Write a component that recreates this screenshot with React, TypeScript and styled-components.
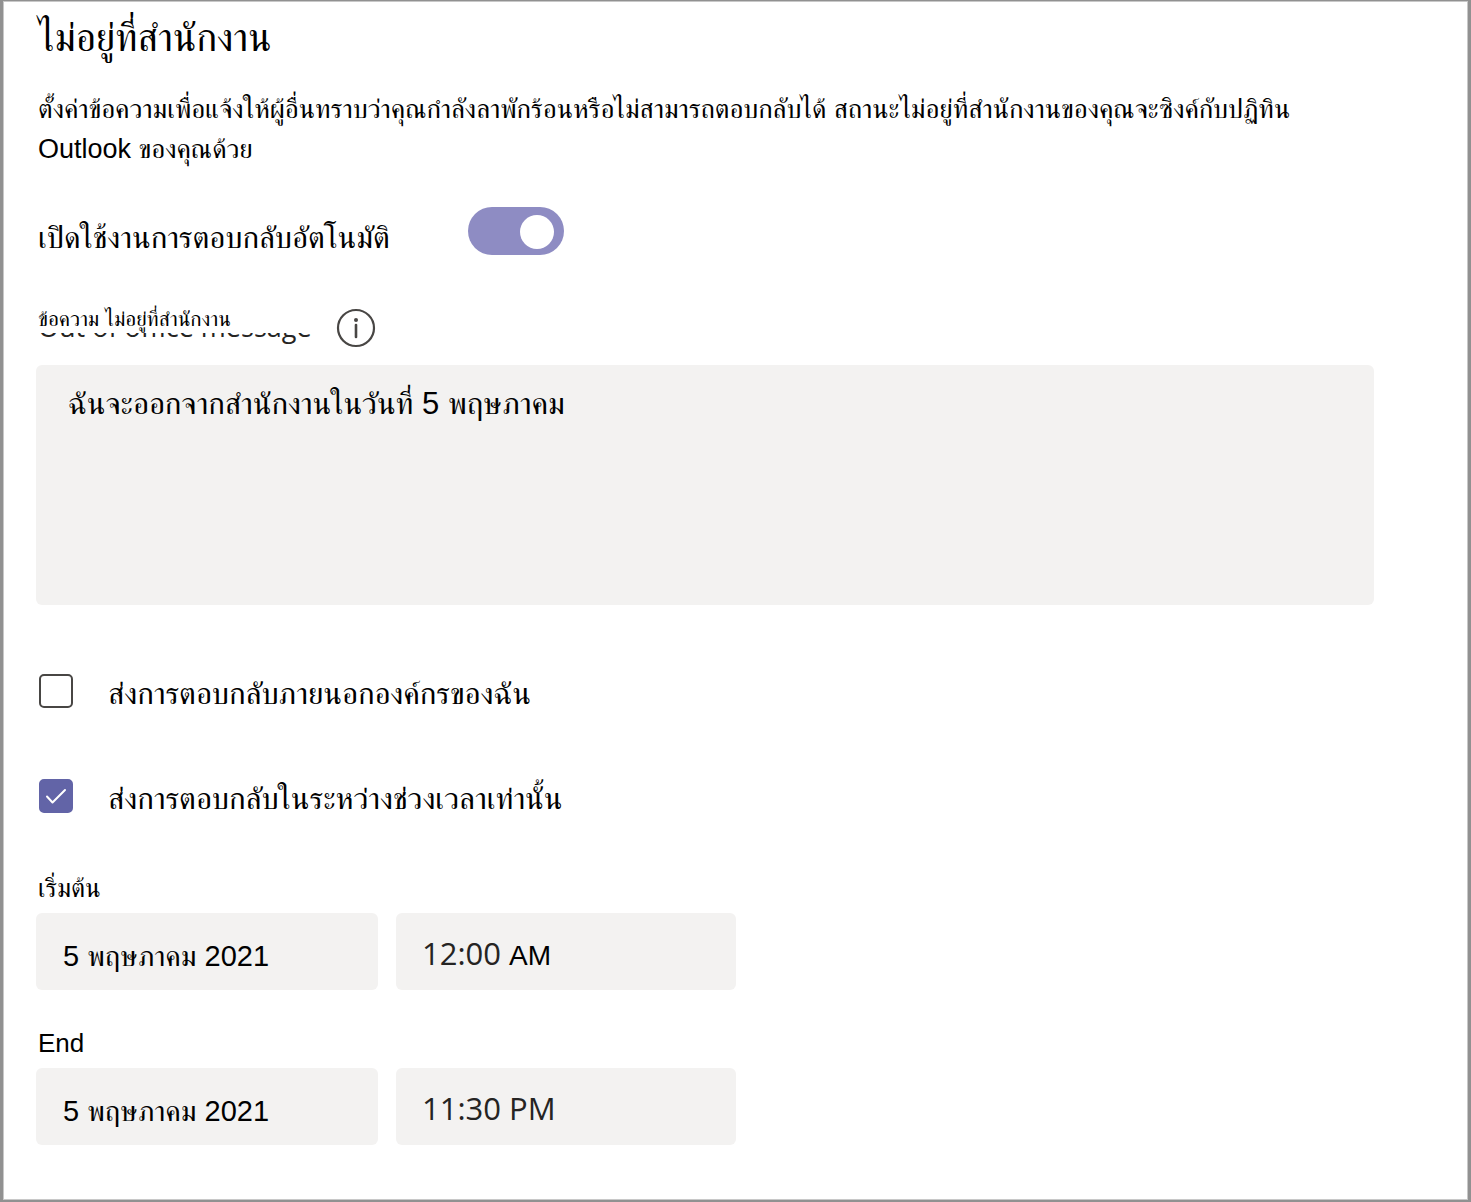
import React, { useState } from "react";
import styled, { createGlobalStyle } from "styled-components";

const thai = `"Liberation Sans", FreeSerif, "Noto Serif Thai", sans-serif`;
const ui = `"Open Sans", "Noto Sans", sans-serif`;

const GlobalStyle = createGlobalStyle`
  *, *::before, *::after { box-sizing: border-box; }
  body { margin: 0; background: #fff; }
  button, input, textarea { font: inherit; color: inherit; border: 0; margin: 0; }
`;

const Panel = styled.main`
  min-height: 100vh;
  padding: 13px 94px 54px 33px;
  border: 2px solid #919191;
  border-top-width: 1px;
  border-left-width: 3px;
  border-right-width: 3px;
  box-shadow: inset 0 0 0 1px #c8c8c8;
  background: #fff;
  color: #000;
  font-family: ${thai};
`;

const Title = styled.h1`
  margin: 0;
  padding-left: 2px;
  font-size: 39px;
  line-height: 48px;
  font-weight: 400;
`;

const Description = styled.p`
  margin: 27px 0 0;
  padding-left: 2px;
  font-size: 27px;
  line-height: 40px;
`;

const ToggleRow = styled.div`
  display: flex;
  align-items: flex-start;
  gap: 78px;
  margin-top: 38px;
  padding-left: 2px;
`;

const ToggleLabel = styled.label`
  padding-top: 13px;
  font-size: 31px;
  line-height: 35px;
`;

const Switch = styled.input`
  appearance: none;
  flex: none;
  width: 96px;
  height: 48px;
  padding: 8px 10px;
  border-radius: 24px;
  background: #8e8cc3;
  display: flex;
  justify-content: flex-start;
  cursor: pointer;

  &:checked { justify-content: flex-end; }
  &::before {
    content: "";
    width: 34px;
    height: 34px;
    border-radius: 50%;
    background: #fff;
  }
`;

const MessageHeader = styled.div`
  display: flex;
  align-items: flex-end;
  gap: 24px;
  margin-top: 50px;
  padding-left: 2px;
`;

const MessageLabel = styled.label`
  display: block;
  font-size: 21px;
  line-height: 28px;
`;

const ClippedCaption = styled.span`
  display: flex;
  align-items: flex-end;
  height: 15px;
  overflow: hidden;
  font-family: ${ui};
  font-size: 27px;
  line-height: 42px;
  color: #252423;
`;

const InfoButton = styled.button`
  display: flex;
  padding: 0;
  background: none;
  cursor: pointer;
`;

const Message = styled.textarea`
  display: block;
  width: 100%;
  height: 240px;
  margin-top: 17px;
  padding: 20px 32px;
  border-radius: 6px;
  background: #f3f2f1;
  font-size: 31px;
  line-height: 38px;
  resize: none;
`;

const Options = styled.div`
  display: grid;
  gap: 67px;
  margin-top: 69px;
`;

const CheckRow = styled.label`
  display: flex;
  align-items: flex-start;
  gap: 35px;
  padding-left: 3px;
  font-size: 31px;
  line-height: 36px;
`;

const Tick = styled.span`
  display: grid;
  flex: none;
  width: 34px;
  height: 34px;

  & > * { grid-area: 1 / 1; }
`;

const TickInput = styled.input`
  appearance: none;
  width: 34px;
  height: 34px;
  border: 2px solid #484644;
  border-radius: 5px;
  background: #fff;

  &:checked { border-color: #6264a7; background: #6264a7; }
`;

const CheckText = styled.span`
  padding-top: 2px;
`;

const Periods = styled.div`
  display: grid;
  gap: 38px;
  margin-top: 56px;
`;

const Period = styled.fieldset`
  min-width: 0;
  margin: 0;
  padding: 0;
  border: 0;
`;

const PeriodName = styled.legend`
  padding: 0 0 10px 2px;
  font-size: 26px;
  line-height: 30px;
`;

const Fields = styled.div`
  display: flex;
  gap: 18px;
`;

const DateInput = styled.input`
  width: 342px;
  height: 77px;
  padding: 10px 27px 0;
  border-radius: 6px;
  background: #f3f2f1;
  font-size: 29px;
`;

const TimeButton = styled.button`
  display: flex;
  align-items: baseline;
  gap: 8px;
  width: 340px;
  height: 77px;
  padding: 20px 26px;
  border-radius: 6px;
  background: #f3f2f1;
  color: #252423;
  font-family: ${ui};
  font-size: 31px;
  line-height: 40px;
  cursor: pointer;
`;

const Meridiem = styled.span`
  font-family: ${thai};
  font-size: 28px;
  color: #000;
`;

function InfoIcon() {
  return (
    <svg width="40" height="40" viewBox="0 0 40 40" fill="none" aria-hidden="true">
      <circle cx="20" cy="20" r="18" stroke="#484644" strokeWidth="2.2" />
      <circle cx="20" cy="12" r="2" fill="#484644" />
      <path d="M20 17v12" stroke="#484644" strokeWidth="2.6" strokeLinecap="round" />
    </svg>
  );
}

function CheckOption({ text, initial }: { text: string; initial: boolean }) {
  const [on, setOn] = useState(initial);
  return (
    <CheckRow>
      <Tick>
        <TickInput type="checkbox" checked={on} onChange={() => setOn(!on)} />
        {on && (
          <svg width="34" height="34" viewBox="0 0 34 34" fill="none" aria-hidden="true">
            <path d="M8 17.5l5.5 6L26 11" stroke="#fff" strokeWidth="2" strokeLinecap="round" strokeLinejoin="round" />
          </svg>
        )}
      </Tick>
      <CheckText>{text}</CheckText>
    </CheckRow>
  );
}

export default function App() {
  const [enabled, setEnabled] = useState(true);
  return (
    <>
      <GlobalStyle />
      <Panel lang="th">
        <Title>ไม่อยู่ที่สำนักงาน</Title>
        <Description>
          ตั้งค่าข้อความเพื่อแจ้งให้ผู้อื่นทราบว่าคุณกำลังลาพักร้อนหรือไม่สามารถตอบกลับได้ สถานะไม่อยู่ที่สำนักงานของคุณจะซิงค์กับปฏิทิน Outlook ของคุณด้วย
        </Description>

        <ToggleRow>
          <ToggleLabel htmlFor="auto-reply">เปิดใช้งานการตอบกลับอัตโนมัติ</ToggleLabel>
          <Switch id="auto-reply" type="checkbox" role="switch" checked={enabled} onChange={() => setEnabled(!enabled)} />
        </ToggleRow>

        <MessageHeader>
          <MessageLabel htmlFor="message">
            ข้อความ ไม่อยู่ที่สำนักงาน
            <ClippedCaption>Out of office message</ClippedCaption>
          </MessageLabel>
          <InfoButton type="button">
            <InfoIcon />
          </InfoButton>
        </MessageHeader>
        <Message id="message" defaultValue="ฉันจะออกจากสำนักงานในวันที่ 5 พฤษภาคม" />

        <Options>
          <CheckOption text="ส่งการตอบกลับภายนอกองค์กรของฉัน" initial={false} />
          <CheckOption text="ส่งการตอบกลับในระหว่างช่วงเวลาเท่านั้น" initial />
        </Options>

        <Periods>
          <Period>
            <PeriodName id="start">เริ่มต้น</PeriodName>
            <Fields>
              <DateInput aria-labelledby="start" defaultValue="5 พฤษภาคม 2021" />
              <TimeButton type="button">
                12:00 <Meridiem>AM</Meridiem>
              </TimeButton>
            </Fields>
          </Period>

          <Period>
            <PeriodName id="end">End</PeriodName>
            <Fields>
              <DateInput aria-labelledby="end" defaultValue="5 พฤษภาคม 2021" />
              <TimeButton type="button">11:30 PM</TimeButton>
            </Fields>
          </Period>
        </Periods>
      </Panel>
    </>
  );
}
